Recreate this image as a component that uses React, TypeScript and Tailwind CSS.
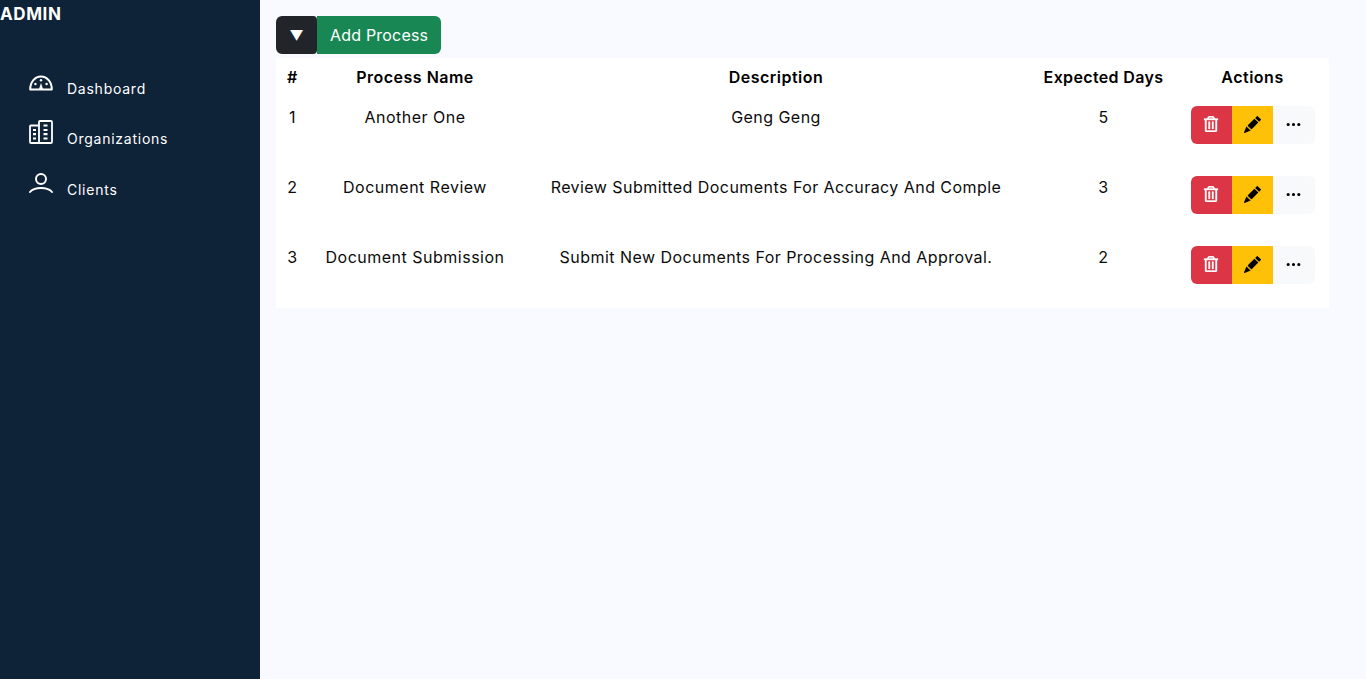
import { BsPencilFill, BsThreeDots } from "react-icons/bs";
import { FaRegTrashAlt } from "react-icons/fa";

const rows = [
  { id: 1, name: "Another One", description: "Geng Geng", days: 5 },
  { id: 2, name: "Document Review", description: "Review Submitted Documents For Accuracy And Comple", days: 3 },
  { id: 3, name: "Document Submission", description: "Submit New Documents For Processing And Approval.", days: 2 },
];

function GaugeIcon() {
  return (
    <svg width="24" height="16" viewBox="0 0 24 16" fill="none" stroke="white" strokeWidth="2">
      <path d="M1.2 14.6 C1.2 7 6 1.5 12 1.5 S22.8 7 22.8 14.6 Z" strokeLinejoin="round" />
      <path d="M12 8 L10 14 H14 Z" fill="white" stroke="none" />
      <circle cx="12" cy="5.2" r="1.2" fill="white" stroke="none" />
      <circle cx="6.4" cy="9" r="1.2" fill="white" stroke="none" />
      <circle cx="17.6" cy="9" r="1.2" fill="white" stroke="none" />
    </svg>
  );
}

function BuildingIcon() {
  return (
    <svg width="24" height="24" viewBox="0 0 24 24" fill="none" stroke="white" strokeWidth="1.8" strokeLinejoin="round">
      <path d="M10 5.5 H2 a1 1 0 0 0 -1 1 V22 a1 1 0 0 0 1 1 H22 a1 1 0 0 0 1 -1 V2 a1 1 0 0 0 -1 -1 H11 a1 1 0 0 0 -1 1 V23" />
      <path d="M4 10 H7 M4 14.2 H7 M4 18.5 H7 M14.5 5.5 H18.5 M14.5 10 H18.5 M14.5 14.2 H18.5 M14.5 18.5 H18.5" strokeWidth="2.2" />
    </svg>
  );
}

function PersonIcon() {
  return (
    <svg width="24" height="22" viewBox="0 0 24 22" fill="none" stroke="white" strokeWidth="2">
      <circle cx="12" cy="6" r="5" />
      <path d="M1 19 C5 13.5 19 13.5 23 19" strokeLinecap="round" />
    </svg>
  );
}

export default function App() {
  return (
    <div className="flex h-[679px] overflow-hidden bg-[#f9faff] font-['Inter',sans-serif]">
      {/* Sidebar */}
      <aside className="w-[260px] shrink-0 bg-[#0e2238] text-white">
        <div className="h-[27px] text-[17px] font-bold leading-[28px] tracking-[0.6px]">ADMIN</div>
        <nav className="mt-[42px] flex flex-col pl-[29px]">
          <div className="flex h-[32px] items-start">
            <span className="mt-[6px] w-[38px]"><GaugeIcon /></span>
            <span className="mt-[9px] text-[14px] leading-[21px] tracking-[0.75px]">Dashboard</span>
          </div>
          <div className="mt-[18px] flex h-[32px] items-start">
            <span className="mt-[1px] w-[38px]"><BuildingIcon /></span>
            <span className="mt-[9px] text-[14px] leading-[21px] tracking-[0.75px]">Organizations</span>
          </div>
          <div className="mt-[19px] flex h-[32px] items-start">
            <span className="mt-[3px] w-[38px]"><PersonIcon /></span>
            <span className="mt-[9px] text-[14px] leading-[21px] tracking-[0.75px]">Clients</span>
          </div>
        </nav>
      </aside>

      {/* Main */}
      <main className="flex-1 pl-[16px] pt-[16px]">
        <div className="flex h-[38px]">
          <button className="flex w-[41px] items-center justify-center rounded-l-md rounded-r-sm bg-[#212529] pt-[1px] text-[14px] text-white">▼</button>
          <button className="rounded-r-md bg-[#198754] px-[13px] pb-[1px] text-[16px] tracking-[0.2px] text-white">Add Process</button>
        </div>
        <table className="mt-[4px] w-[1053px] table-fixed bg-white text-[16px] tracking-[0.5px] text-[#0b0b0b]">
          <colgroup>
            <col className="w-[33px]" />
            <col className="w-[212px]" />
            <col className="w-[510px]" />
            <col className="w-[145px]" />
            <col className="w-[153px]" />
          </colgroup>
          <thead>
            <tr className="h-[40px] text-black">
              <th className="pb-[2px] font-semibold">#</th>
              <th className="pb-[2px] font-semibold">Process Name</th>
              <th className="pb-[2px] font-semibold">Description</th>
              <th className="pb-[2px] font-semibold tracking-[0.35px]">Expected Days</th>
              <th className="pb-[2px] font-semibold">Actions</th>
            </tr>
          </thead>
          <tbody>
            {rows.map((r) => (
              <tr key={r.id} className="h-[70px] text-center align-top">
                <td className="pt-[7px]">{r.id}</td>
                <td className="pt-[7px]">{r.name}</td>
                <td className="pt-[7px] whitespace-nowrap tracking-[0.45px]">{r.description}</td>
                <td className="pt-[7px]">{r.days}</td>
                <td className="pt-[8px]">
                  <div className="flex h-[38px] justify-center">
                    <button className="flex w-[41px] items-center justify-center rounded-l-md bg-[#dc3545] pb-[2px] text-white">
                      <FaRegTrashAlt size={16} className="stroke-white stroke-[12px]" />
                    </button>
                    <button className="flex w-[41px] items-center justify-center bg-[#ffc107] pb-[2px] text-black">
                      <BsPencilFill size={17} />
                    </button>
                    <button className="flex w-[42px] items-center justify-center rounded-r-md bg-[#f8f9fa] pb-[2px] text-black">
                      <BsThreeDots size={17} />
                    </button>
                  </div>
                </td>
              </tr>
            ))}
          </tbody>
        </table>
      </main>
    </div>
  );
}
